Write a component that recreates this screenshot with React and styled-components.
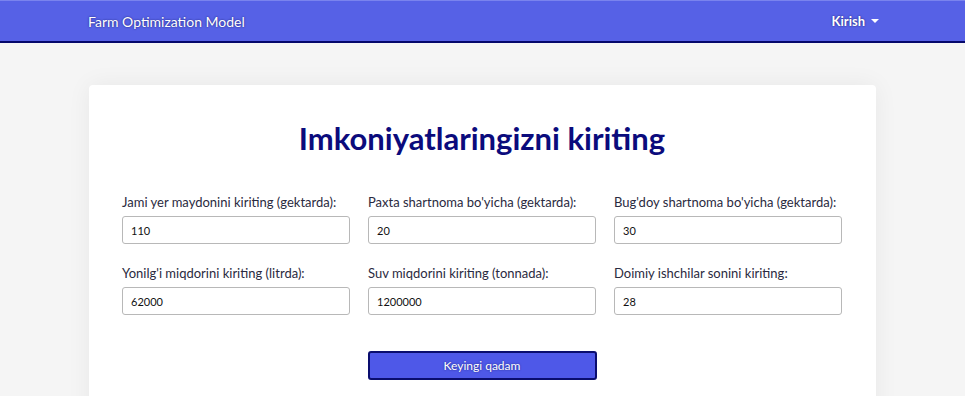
import React from "react";
import styled, { createGlobalStyle } from "styled-components";

const Global = createGlobalStyle`
  html, body { margin: 0; padding: 0; }
  body {
    background: #f5f5f5;
    font-family: "Lato", "Open Sans", sans-serif;
    color: #333;
  }
`;

const Navbar = styled.nav`
  height: 40px;
  background: #5661e6;
  border-top: 1px solid #7a83ee;
  border-bottom: 2px solid #05086b;
  display: flex;
  align-items: center;
  justify-content: space-between;
  padding: 0 86px 0 88px;
`;

const Brand = styled.div`
  color: #fff;
  font-size: 14px;
  text-shadow: 0 0 2px rgba(0, 0, 60, 0.7);
`;

const NavItem = styled.div`
  color: #fff;
  font-size: 13px;
  font-weight: 700;
  display: flex;
  align-items: center;
  gap: 6px;
  text-shadow: 0 0 2px rgba(0, 0, 60, 0.7);
`;

const Caret = styled.span`
  width: 0;
  height: 0;
  border-left: 4px solid transparent;
  border-right: 4px solid transparent;
  border-top: 4px solid #fff;
`;

const Main = styled.main`
  padding: 42px 89px 0;
`;

const Card = styled.section`
  background: #fff;
  border-radius: 4px;
  box-shadow: 0 0 24px rgba(0, 0, 0, 0.06);
  padding: 34px 34px 20px 33px;
  min-height: 300px;
`;

const Title = styled.h1`
  margin: 0 0 37px;
  text-align: center;
  font-size: 31px;
  font-weight: 700;
  color: #0b0b7c;
  line-height: 38px;
`;

const Grid = styled.div`
  display: grid;
  grid-template-columns: repeat(3, 228px);
  column-gap: 18px;
  row-gap: 21px;
`;

const Field = styled.label`
  display: flex;
  flex-direction: column;
  gap: 6px;
  font-size: 13px;
  color: #2a2a40;
  line-height: 16px;
`;

const Input = styled.input`
  box-sizing: border-box;
  height: 28px;
  width: 100%;
  border: 1px solid #b8b8b8;
  border-radius: 3px;
  padding: 0 8px;
  font-family: "Lato", sans-serif;
  font-size: 11px;
  color: #111;
  background: #fff;
`;

const Actions = styled.div`
  display: flex;
  justify-content: center;
  margin-top: 36px;
`;

const Button = styled.button`
  width: 229px;
  height: 29px;
  background: #4e58e8;
  border: 2px solid #0a0d6e;
  border-radius: 3px;
  color: #fff;
  font-family: "Lato", sans-serif;
  font-size: 12px;
  text-shadow: 0 0 2px rgba(0, 0, 60, 0.6);
`;

const fields = [
  ["Jami yer maydonini kiriting (gektarda):", "110"],
  ["Paxta shartnoma bo'yicha (gektarda):", "20"],
  ["Bug'doy shartnoma bo'yicha (gektarda):", "30"],
  ["Yonilg'i miqdorini kiriting (litrda):", "62000"],
  ["Suv miqdorini kiriting (tonnada):", "1200000"],
  ["Doimiy ishchilar sonini kiriting:", "28"],
];

export default function App() {
  return (
    <>
      <Global />
      <Navbar>
        <Brand>Farm Optimization Model</Brand>
        <NavItem>
          Kirish <Caret />
        </NavItem>
      </Navbar>
      <Main>
        <Card>
          <Title>Imkoniyatlaringizni kiriting</Title>
          <Grid>
            {fields.map(([label, value]) => (
              <Field key={label}>
                {label}
                <Input defaultValue={value} />
              </Field>
            ))}
          </Grid>
          <Actions>
            <Button>Keyingi qadam</Button>
          </Actions>
        </Card>
      </Main>
    </>
  );
}
